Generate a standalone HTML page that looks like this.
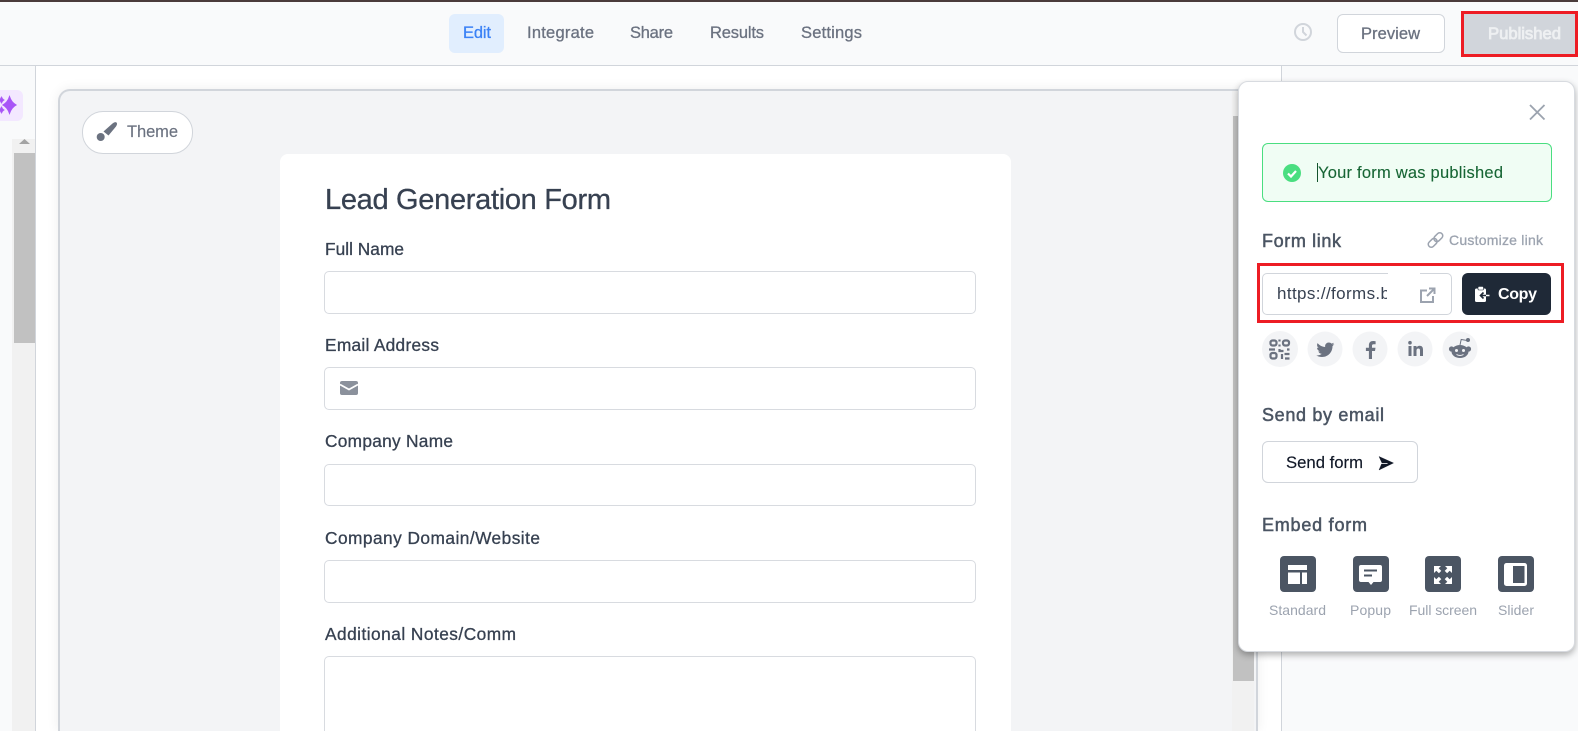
<!DOCTYPE html>
<html lang="en">
<head>
<meta charset="utf-8">
<title>Form editor</title>
<style>
html,body{margin:0;padding:0;width:1578px;height:731px;overflow:hidden;background:#fff;font-family:"Liberation Sans",sans-serif}
#p{position:relative;width:1578px;height:731px;overflow:hidden;background:#fff}
.b{position:absolute;box-sizing:border-box}
svg{position:absolute;left:0;top:0}
text{font-family:"Liberation Sans",sans-serif}
.m{stroke-width:.3px}
.h{stroke-width:.5px}
</style>
</head>
<body>
<div id="p">
<div class="b" style="left:0;top:0;width:1578px;height:66px;background:#f9fafb;border-top:2px solid #4a3b3b;border-bottom:1px solid #d1d5db"></div>
<div class="b" style="left:449px;top:14px;width:55px;height:39px;background:#e1eefe;border-radius:6px"></div>
<div class="b" style="left:1337px;top:14px;width:108px;height:39px;background:#fff;border:1px solid #d1d5db;border-radius:6px"></div>
<div class="b" style="left:1461px;top:11px;width:117px;height:46px;border:3px solid #ed1c24;background:#d1d5db"></div>

<div class="b" style="left:0;top:66px;width:36px;height:665px;background:#f9fafb;border-right:1px solid #d1d5db"></div>
<div class="b" style="left:-10px;top:90px;width:33px;height:31px;background:#f3e8ff;border-radius:6px"></div>
<div class="b" style="left:12px;top:139px;width:23px;height:592px;background:#f1f1f1"></div>
<div class="b" style="left:14px;top:153px;width:21px;height:190px;background:#c1c1c1"></div>

<div class="b" style="left:1281px;top:66px;width:297px;height:665px;background:#f9fafb;border-left:1px solid #d1d5db"></div>

<div class="b" style="left:58px;top:89px;width:1200px;height:642px;background:#f3f4f6;border:2px solid #d1d5db;border-bottom:0;border-radius:12px 12px 0 0;box-shadow:0 0 12px rgba(0,0,0,.07)"></div>
<div class="b" style="left:1232px;top:91px;width:22px;height:640px;background:#f1f1f1"></div>
<div class="b" style="left:1233px;top:116px;width:21px;height:565px;background:#c1c1c1"></div>

<div class="b" style="left:82px;top:111px;width:111px;height:43px;background:#fff;border:1px solid #d1d5db;border-radius:21px"></div>
<div class="b" style="left:280px;top:154px;width:731px;height:577px;background:#fff;border-radius:8px 8px 0 0"></div>
<div class="b" style="left:324px;top:271px;width:652px;height:43px;background:#fff;border:1px solid #d8dbe0;border-radius:5px"></div>
<div class="b" style="left:324px;top:367px;width:652px;height:43px;background:#fff;border:1px solid #d8dbe0;border-radius:5px"></div>
<div class="b" style="left:324px;top:464px;width:652px;height:42px;background:#fff;border:1px solid #d8dbe0;border-radius:5px"></div>
<div class="b" style="left:324px;top:560px;width:652px;height:43px;background:#fff;border:1px solid #d8dbe0;border-radius:5px"></div>
<div class="b" style="left:324px;top:656px;width:652px;height:75px;background:#fff;border:1px solid #d8dbe0;border-bottom:0;border-radius:5px 5px 0 0"></div>

<div class="b" style="left:1238px;top:81px;width:337px;height:571px;background:#fff;border:1px solid #d8dbe0;border-radius:10px;box-shadow:0 3px 7px rgba(0,0,0,.3)"></div>
<div class="b" style="left:1262px;top:143px;width:290px;height:59px;background:#f0fdf4;border:1px solid #4ade80;border-radius:6px"></div>
<div class="b" style="left:1257px;top:263px;width:307px;height:60px;border:3px solid #ed1c24"></div>
<div class="b" style="left:1262px;top:273px;width:190px;height:42px;background:#fff;border:1px solid #d1d5db;border-radius:5px"></div>
<div class="b" style="left:1388px;top:273px;width:32px;height:1px;background:#fff"></div>
<div class="b" style="left:1462px;top:273px;width:89px;height:42px;background:#1f2937;border-radius:6px"></div>
<div class="b" style="left:1262px;top:441px;width:156px;height:42px;background:#fff;border:1px solid #d1d5db;border-radius:6px"></div>

<svg width="1578" height="731" viewBox="0 0 1578 731">
<defs><clipPath id="u"><rect x="1270" y="280" width="117" height="28"/></clipPath></defs>

<!-- nav -->
<g font-size="16.5">
<text x="463" y="38" textLength="28" fill="#3b82f6" stroke="#3b82f6" class="m">Edit</text>
<text x="527" y="38" textLength="67" fill="#6b7280" stroke="#6b7280" class="m">Integrate</text>
<text x="630" y="38" textLength="43" fill="#6b7280" stroke="#6b7280" class="m">Share</text>
<text x="710" y="38" textLength="54" fill="#6b7280" stroke="#6b7280" class="m">Results</text>
<text x="801" y="38" textLength="61" fill="#6b7280" stroke="#6b7280" class="m">Settings</text>
<text x="1361" y="39" textLength="59" fill="#6b7280" stroke="#6b7280" class="m">Preview</text>
<text x="1488" y="39" textLength="73" font-size="16.7" fill="#eef0f2" stroke="#eef0f2" style="stroke-width:.8px">Published</text>
</g>
<circle cx="1303" cy="32" r="8" fill="none" stroke="#d1d5db" stroke-width="2"/>
<path d="M1303 27v5l3.5 3.5" fill="none" stroke="#d1d5db" stroke-width="2"/>

<!-- sparkle -->
<path d="M9.500 96Q11.500 102.500 16.500 105 11.500 107.500 9.500 114 7.500 107.500 2.500 105 7.500 102.500 9.500 96z" fill="#a855f7" stroke="#a855f7" stroke-width=".6"/>
<path d="M1.500 96.500Q2.400 99.100 4.500 100 2.400 100.900 1.500 103.500 .6 100.900-1.500 100 .6 99.100 1.500 96.500zM1.500 106.500Q2.400 109.100 4.500 110 2.400 110.900 1.500 113.500 .6 110.900-1.500 110 .6 109.100 1.500 106.500z" fill="#a855f7" stroke="#a855f7" stroke-width=".5"/>
<path d="M19 144l5.500-5 5.500 5z" fill="#a3a3a3"/>

<!-- theme -->
<path d="M112.500 123.500Q115 121.300 116.500 122.500 117.800 124 116 126.500L108.500 135.500 103.500 131.500z" fill="#6b7280"/>
<circle cx="100.700" cy="137" r="4" fill="#6b7280"/>
<text x="127" y="137" font-size="16.500" textLength="51" fill="#6b7280" stroke="#6b7280" style="stroke-width:.15px">Theme</text>

<!-- form -->
<text x="325" y="209" font-size="29" textLength="286" fill="#374151" stroke="#374151" class="m">Lead Generation Form</text>
<g font-size="17.300" fill="#374151" stroke="#374151">
<text class="m" x="325" y="255" textLength="79">Full Name</text>
<text class="m" x="325" y="351" textLength="114">Email Address</text>
<text class="m" x="325" y="447" textLength="128">Company Name</text>
<text class="m" x="325" y="544" textLength="215">Company Domain/Website</text>
<text class="m" x="325" y="640" textLength="191">Additional Notes/Comm</text>
</g>
<rect x="340" y="381" width="18" height="14" rx="2" fill="#8b919c"/>
<path d="M340 384.500l9 5 9-5" fill="none" stroke="#fff" stroke-width="1.800"/>

<!-- panel -->
<path d="M1530 105l14.500 14.500M1544.500 105L1530 119.500" stroke="#9ca3af" stroke-width="1.800" fill="none"/>
<circle cx="1292" cy="173" r="9" fill="#4ade80"/>
<path d="M1288 173.500l3 3 5-5.500" fill="none" stroke="#fff" stroke-width="2.200"/>
<path d="M1317.500 163v19" stroke="#14532d" stroke-width="1"/>
<text x="1318" y="178" font-size="16.500" textLength="185" fill="#166534" stroke="#166534" style="stroke-width:.1px">Your form was published</text>

<text class="h" x="1262" y="247" font-size="18" textLength="79" fill="#4b5563" stroke="#4b5563">Form link</text>
<g fill="none" stroke="#9ca3af" stroke-width="1.500" transform="rotate(-45 1435.500 240)">
<rect x="1426.500" y="237" width="10" height="6" rx="3"/>
<rect x="1434.500" y="237" width="10" height="6" rx="3"/>
</g>
<text class="m" x="1449" y="245" font-size="14" textLength="94" fill="#9ca3af" stroke="#9ca3af">Customize link</text>

<text x="1277" y="299" font-size="17" textLength="113" fill="#374151" clip-path="url(#u)">https://forms.b</text>
<path d="M1427 290.500h-6v11.500h12v-6M1427 296l7-7M1429 288.500h5.500v5.500" fill="none" stroke="#9ca3af" stroke-width="2"/>

<rect x="1475" y="288.500" width="11" height="13.500" rx="1.500" fill="#fff"/>
<rect x="1478" y="286.500" width="5.500" height="3.500" rx="1" fill="#fff" stroke="#1f2937" stroke-width=".6"/>
<path d="M1486 295.500h-5.500M1483.500 292.500l-3 3 3 3" fill="none" stroke="#1f2937" stroke-width="1.600"/>
<path d="M1486 295.500h3.500" stroke="#fff" stroke-width="1.500"/>
<text x="1498" y="299" font-size="16" font-weight="700" textLength="39" fill="#fff">Copy</text>

<circle cx="1280" cy="349" r="18" fill="#f3f4f6"/>
<circle cx="1325" cy="349" r="17.500" fill="#f3f4f6"/>
<circle cx="1370" cy="349" r="17.500" fill="#f3f4f6"/>
<circle cx="1415" cy="349" r="17.500" fill="#f3f4f6"/>
<circle cx="1460" cy="349" r="17.500" fill="#f3f4f6"/>
<!-- qr -->
<g fill="none" stroke="#6b7280" stroke-width="2.200">
<rect x="1270.500" y="340.500" width="6" height="5" rx="2"/>
<rect x="1283" y="340.500" width="6" height="5" rx="2"/>
<rect x="1270.500" y="353" width="6" height="5.500" rx="2"/>
<path d="M1279.500 339.500v2M1279.500 344.500v2M1269 349.500h6M1279.500 349v2h4M1287 349.500h2.500M1282 354v5M1284.500 354h5M1285 358.500h4.500"/>
</g>
<!-- twitter -->
<g transform="translate(1315 339) scale(.86)"><path fill="#6b7280" d="M22.460 6c-.77.35-1.600.58-2.460.69.88-.53 1.560-1.370 1.880-2.380-.83.5-1.750.85-2.720 1.050C18.370 4.500 17.260 4 16 4c-2.350 0-4.270 1.920-4.270 4.290 0 .34.04.67.11.98C8.280 9.090 5.110 7.380 3 4.790c-.37.63-.58 1.370-.58 2.150 0 1.490.75 2.810 1.910 3.560-.71 0-1.370-.2-1.950-.5v.03c0 2.080 1.480 3.820 3.440 4.210a4.220 4.220 0 0 1-1.930.07 4.280 4.280 0 0 0 4 2.980 8.521 8.521 0 0 1-5.330 1.840c-.34 0-.68-.02-1.020-.06C3.440 20.290 5.700 21 8.120 21 16 21 20.330 14.460 20.330 8.790c0-.19 0-.37-.01-.56.84-.6 1.560-1.360 2.140-2.230z"/></g>
<!-- facebook -->
<path fill="#6b7280" d="M1372 359v-8h3l.5-3.200H1372v-2c0-1 .4-1.600 1.700-1.600h1.900v-3c-.6-.1-1.500-.2-2.500-.2-2.700 0-4.200 1.500-4.200 4.300v2.500h-3v3.200h3v8z"/>
<!-- linkedin -->
<circle cx="1410" cy="342.700" r="1.800" fill="#6b7280"/>
<path fill="#6b7280" d="M1408.500 346h3v10h-3zM1413.500 346h3v1.500c.7-1.100 1.800-1.700 3-1.700 2.600 0 3.500 1.600 3.500 4V356h-3v-5.500c0-1.300-.5-2-1.700-2s-1.800.9-1.800 2.100V356h-3z"/>
<!-- reddit -->
<g fill="#6b7280">
<circle cx="1451.500" cy="349" r="2.600"/><circle cx="1468.500" cy="349" r="2.600"/>
<ellipse cx="1460" cy="351.500" rx="8.500" ry="6.500"/>
<circle cx="1468" cy="340" r="2"/>
<path d="M1460 345l1.200-5.500 6 1" fill="none" stroke="#6b7280" stroke-width="1"/>
</g>
<circle cx="1456.500" cy="350.500" r="1.500" fill="#f3f4f6"/><circle cx="1463.500" cy="350.500" r="1.500" fill="#f3f4f6"/>
<path d="M1456.500 354.500c2 1.300 5 1.300 7 0" fill="none" stroke="#f3f4f6" stroke-width="1"/>

<text class="h" x="1262" y="421" font-size="18" textLength="122" fill="#4b5563" stroke="#4b5563">Send by email</text>
<text x="1286" y="468" font-size="16.700" textLength="77" fill="#111827" stroke="#111827" style="stroke-width:.15px">Send form</text>
<path d="M1379 456.500l14.500 6.500-14.500 7 3-7z" fill="#111827" stroke="#111827" stroke-width=".4"/>
<path d="M1380.500 463.500h7" stroke="#fff" stroke-width=".8"/>

<text class="h" x="1262" y="531" font-size="18" textLength="105" fill="#4b5563" stroke="#4b5563">Embed form</text>

<rect x="1280" y="556" width="36" height="36" rx="4" fill="#4b5563"/>
<rect x="1353" y="556" width="36" height="36" rx="4" fill="#4b5563"/>
<rect x="1425" y="556" width="36" height="36" rx="4" fill="#4b5563"/>
<rect x="1498" y="556" width="36" height="36" rx="4" fill="#4b5563"/>
<path fill="#fff" d="M1288 565h19v5h-19zM1288 572.500h12V584h-12zM1302 572.500h5V584h-5z"/>
<path fill="#fff" d="M1361 565h19a2 2 0 0 1 2 2v13a2 2 0 0 1-2 2h-6.500l-2.500 3-2.500-3H1361a2 2 0 0 1-2-2v-13a2 2 0 0 1 2-2z"/>
<path d="M1364 570.500h13M1364 575.500h8" stroke="#4b5563" stroke-width="2"/>
<path fill="#fff" d="M1434 566h7l-2.300 2.300 2.600 2.600-2.400 2.400-2.600-2.600-2.300 2.300zM1452 566v7l-2.300-2.300-2.600 2.600-2.400-2.400 2.600-2.600-2.300-2.300zM1434 584v-7l2.300 2.300 2.600-2.600 2.400 2.400-2.600 2.600 2.300 2.300zM1452 584h-7l2.300-2.300-2.600-2.600 2.400-2.400 2.600 2.600 2.300-2.300z"/>
<rect x="1504" y="563" width="23" height="23" rx="2.500" fill="#fff"/>
<rect x="1513" y="566" width="11.500" height="17" fill="#4b5563"/>

<g font-size="14" fill="#9ca3af">
<text x="1269" y="615" textLength="57">Standard</text>
<text x="1350" y="615" textLength="41">Popup</text>
<text x="1409" y="615" textLength="68">Full screen</text>
<text x="1498" y="615" textLength="36">Slider</text>
</g>
</svg>
</div>
</body>
</html>
